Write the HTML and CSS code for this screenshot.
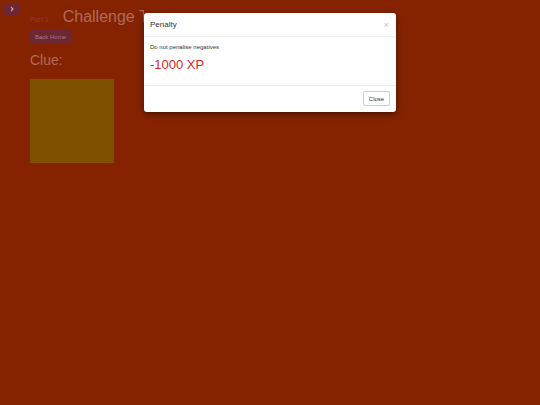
FILE: index.html
```html
<!DOCTYPE html>
<html>
<head>
<meta charset="utf-8">
<link rel="stylesheet" href="styles.css">
</head>
<body>
<button class="toggle"><svg width="6" height="6" viewBox="0 0 6 6"><path d="M2 1 L4 3 L2 5" fill="none" stroke="#c9a0a8" stroke-width="1.2"/></svg></button>
<main class="page">
  <div class="title-row">
    <span class="part">Part 1</span>
    <h1 class="title">Challenge Title</h1>
  </div>
  <button class="back">Back Home</button>
  <h2 class="clue">Clue:</h2>
  <div class="clue-box"></div>
</main>
<div class="modal">
  <div class="modal-header">
    <span class="modal-title">Penalty</span>
    <span class="close-x">×</span>
  </div>
  <div class="modal-body">
    <p class="desc">Do not penalise negatives</p>
    <p class="xp">-1000 XP</p>
  </div>
  <div class="modal-footer">
    <button class="close-btn">Close</button>
  </div>
</div>
</body>
</html>
```
FILE: styles.css
```css
html, body { margin: 0; padding: 0; }
body {
  width: 540px; height: 405px; overflow: hidden;
  background: #852300;
  font-family: "Liberation Sans", Arial, sans-serif;
  position: relative;
}
.toggle {
  position: absolute; left: 4px; top: 3px;
  width: 15px; height: 12px; padding: 0; border: 0; border-radius: 2px;
  background: #6b2834; display: flex; align-items: center; justify-content: center;
}
.page { padding: 7px 0 0 30px; display: flex; flex-direction: column; align-items: flex-start; }
.title-row { display: flex; align-items: baseline; gap: 14px; height: 22px; }
.part { font-size: 7px; color: #983a2a; }
.title {
  margin: 0; font-size: 16px; font-weight: normal; color: #b06a5c; line-height: 20px;
  width: 81px; overflow: hidden; white-space: nowrap;
}
.back {
  margin-top: 1px; height: 13px; padding: 0 5px; border: 0; border-radius: 2px;
  background: #6b2834; color: #a87880; font-size: 6px; font-family: inherit;
}
.clue { margin: 9px 0 0; font-size: 14px; font-weight: normal; color: #b06a5c; line-height: 16px; }
.clue-box { margin-top: 11px; width: 84px; height: 84px; background: #7f5000; }
.modal {
  position: absolute; left: 144px; top: 13px; width: 252px;
  background: #fff; border-radius: 3px;
  box-shadow: 0 2px 6px rgba(0,0,0,0.5);
}
.modal-header {
  height: 23px; padding: 0 6px; border-bottom: 1px solid #eee;
  display: flex; align-items: center; justify-content: space-between;
}
.modal-title { font-size: 8px; color: #333; }
.close-x { font-size: 9px; color: #c8c8c8; margin-right: 1px; }
.modal-body { padding: 7px 6px 12px; border-bottom: 1px solid #eee; }
.desc { margin: 0; font-size: 6px; color: #333; }
.xp { margin: 7px 0 0; font-size: 13px; color: #d9262a; line-height: 16px; }
.modal-footer { padding: 5px 6px 6px; display: flex; justify-content: flex-end; }
.close-btn {
  height: 15px; width: 27px; padding: 0; background: #fff;
  border: 1px solid #ccc; border-radius: 2px; font-size: 6px; color: #333; font-family: inherit;
}
```
